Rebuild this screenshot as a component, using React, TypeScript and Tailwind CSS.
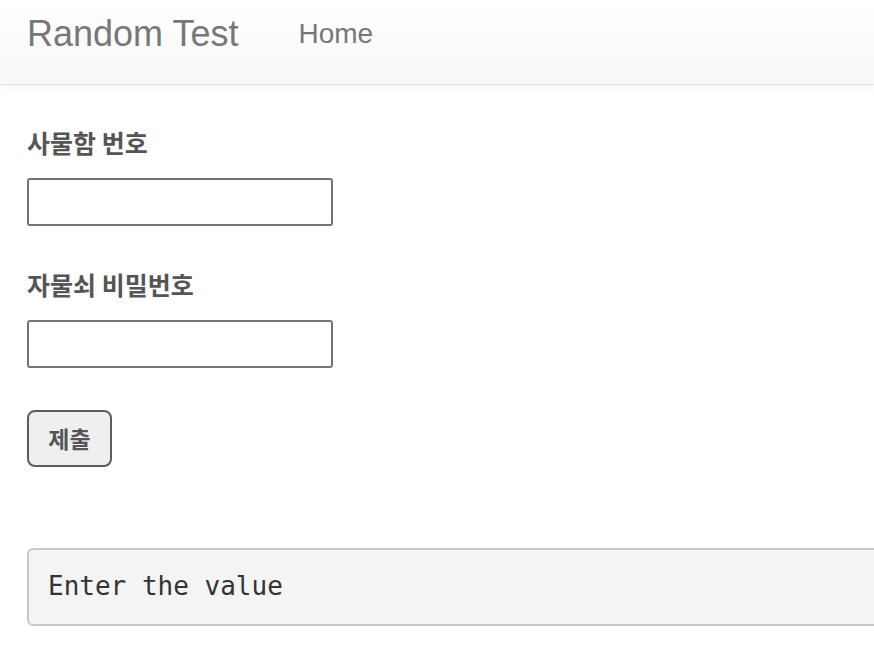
export default function App() {
  return (
    <div className="w-[874px] h-[648px] overflow-hidden bg-white font-['Liberation_Sans','Noto_Sans_CJK_KR',sans-serif]">
      {/* navbar */}
      <nav className="h-[85px] w-full border-b border-[#e3e3e3] bg-gradient-to-b from-white to-[#f8f8f8] shadow-[0_2px_6px_rgba(0,0,0,0.06)] flex items-start">
        <a className="pl-[27px] pt-[16px] text-[36px] leading-[36px] text-[#777]">
          Random Test
        </a>
        <a className="ml-[60px] pt-[20px] text-[28px] leading-[28px] text-[#777]">Home</a>
      </nav>

      <main className="pl-[27px]">
        <form className="flex flex-col items-start">
          <label className="mt-[45px] text-[25px] leading-[25px] font-bold text-[#555] font-['Noto_Sans_CJK_KR',sans-serif]">
            사물함 번호
          </label>
          <input
            type="text"
            className="mt-[23px] w-[306px] h-[48px] rounded-[3px] border-2 border-[#727272] bg-white"
          />
          <label className="mt-[46px] text-[25px] leading-[25px] font-bold text-[#555] font-['Noto_Sans_CJK_KR',sans-serif]">
            자물쇠 비밀번호
          </label>
          <input
            type="password"
            className="mt-[23px] w-[306px] h-[48px] rounded-[3px] border-2 border-[#727272] bg-white"
          />
          <button
            type="button"
            className="mt-[42px] w-[85px] h-[57px] rounded-[8px] border-2 border-[#5c5c5c] bg-[#efefef] text-[23px] font-semibold text-[#555] font-['Noto_Sans_CJK_KR',sans-serif]"
          >
            제출
          </button>
        </form>

        <pre className="mt-[81px] w-[900px] rounded-[6px] border-2 border-[#c8c8c8] bg-[#f4f4f4] pl-[19px] pt-[18px] pb-[20px] text-[26px] leading-[36px] text-[#333] font-['DejaVu_Sans_Mono',monospace]">
          Enter the value
        </pre>
      </main>
    </div>
  );
}
